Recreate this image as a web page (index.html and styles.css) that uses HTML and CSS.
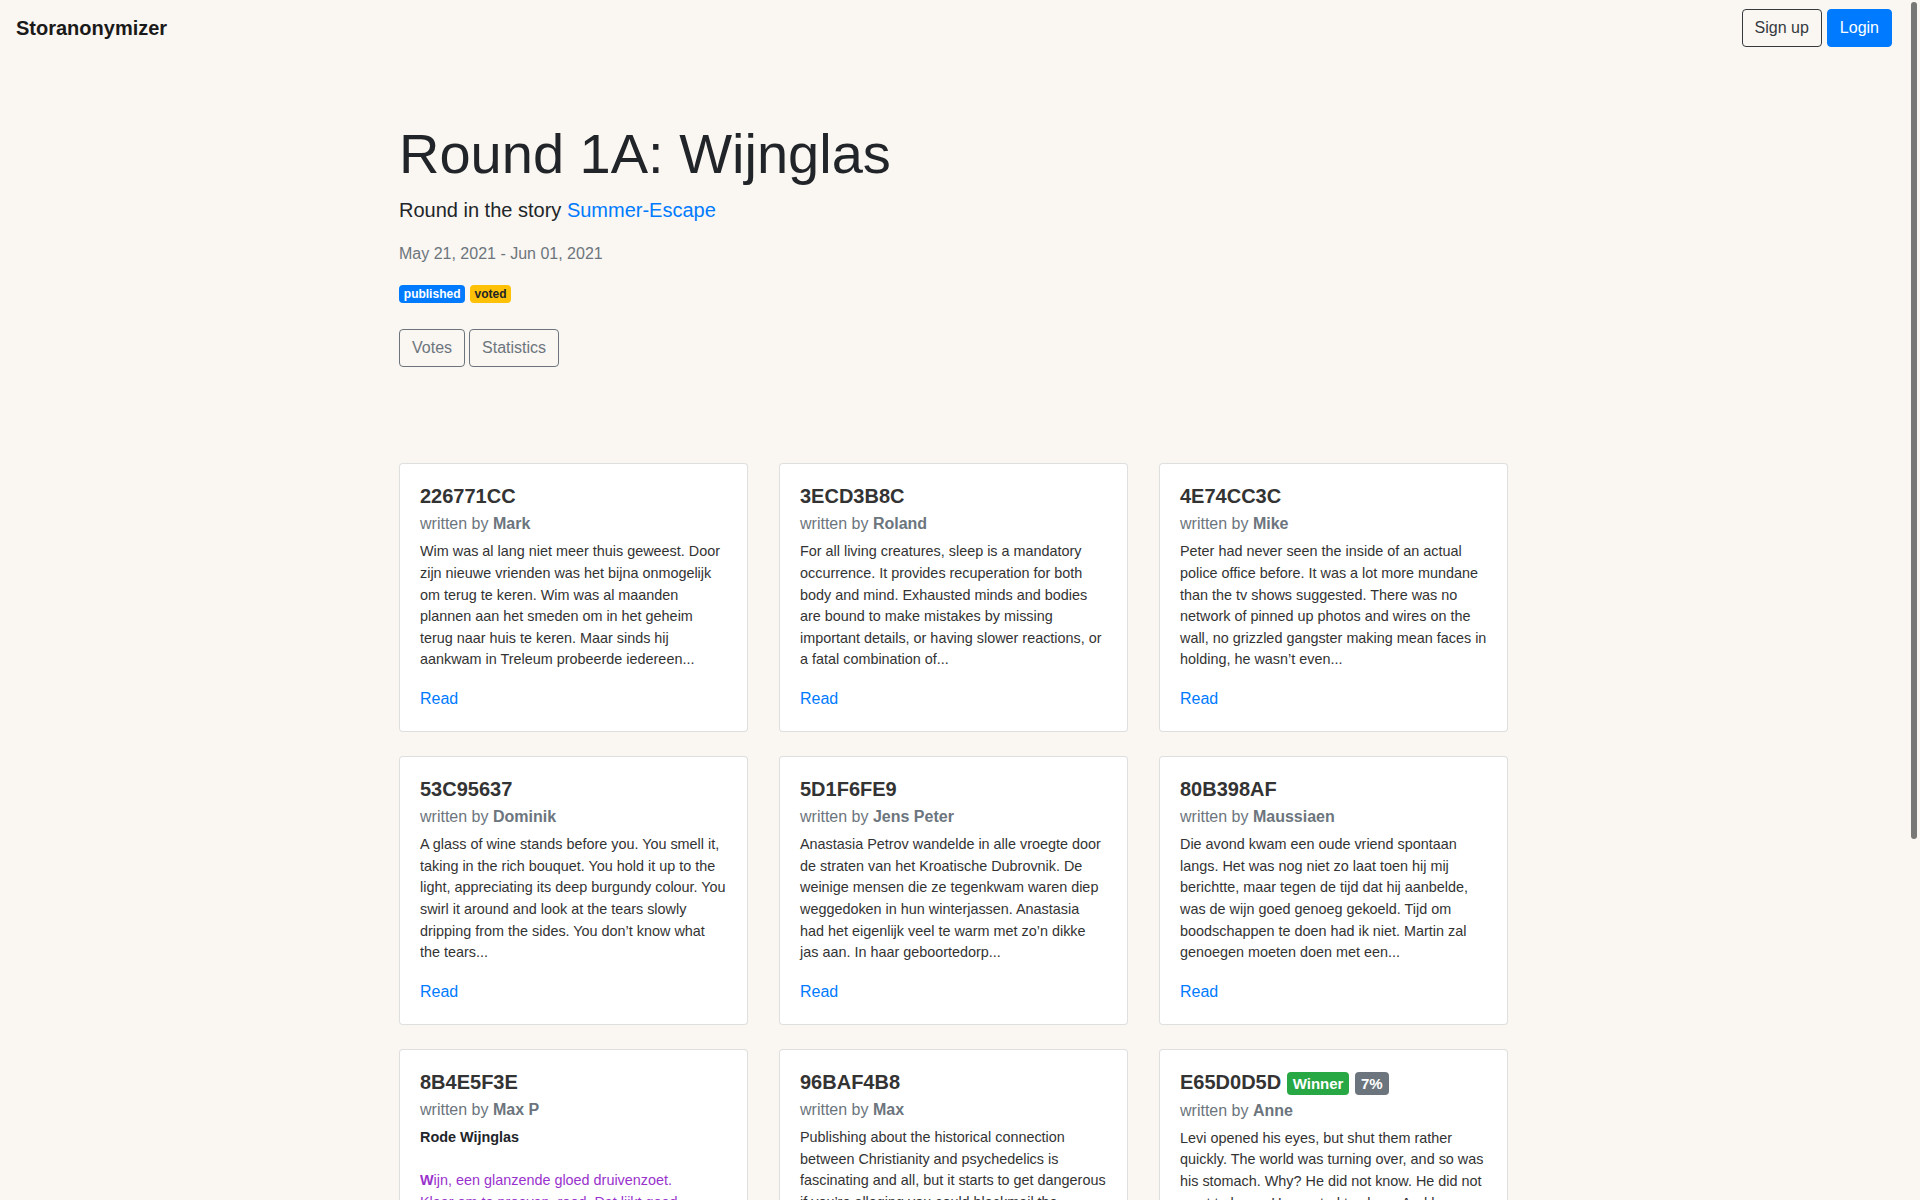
FILE: index.html
```html
<!DOCTYPE html>
<html lang="en">
<head>
<meta charset="utf-8">
<title>Round 1A: Wijnglas - Storanonymizer</title>
<link rel="stylesheet" href="styles.css">
</head>
<body>
<div class="scrollbar" aria-hidden="true"><div class="scrollbar-thumb"></div></div>
<nav class="navbar">
  <a class="brand" href="#">Storanonymizer</a>
  <div class="nav-actions">
    <a class="btn btn-outline-dark" href="#">Sign up</a>
    <a class="btn btn-primary" href="#">Login</a>
  </div>
</nav>

<main class="container">
  <header class="round-header">
    <h1 class="title">Round 1A: Wijnglas</h1>
    <p class="lead">Round in the story <a href="#">Summer-Escape</a></p>
    <p class="dates">May 21, 2021 - Jun 01, 2021</p>
    <div class="badges"><span class="badge badge-primary">published</span> <span class="badge badge-warning">voted</span></div>
    <div class="actions"><a class="btn btn-outline-secondary" href="#">Votes</a> <a class="btn btn-outline-secondary" href="#">Statistics</a></div>
  </header>

  <section class="cards">
    <article class="card">
      <div class="card-body">
        <h5 class="card-title">226771CC</h5>
        <h6 class="card-subtitle">written by <strong>Mark</strong></h6>
        <p class="card-text">Wim was al lang niet meer thuis geweest. Door zijn nieuwe vrienden was het bijna onmogelijk om terug te keren. Wim was al maanden plannen aan het smeden om in het geheim terug naar huis te keren. Maar sinds hij aankwam in Treleum probeerde iedereen...</p>
        <a class="card-link" href="#">Read</a>
      </div>
    </article>
    <article class="card">
      <div class="card-body">
        <h5 class="card-title">3ECD3B8C</h5>
        <h6 class="card-subtitle">written by <strong>Roland</strong></h6>
        <p class="card-text">For all living creatures, sleep is a mandatory occurrence. It provides recuperation for both body and mind. Exhausted minds and bodies are bound to make mistakes by missing important details, or having slower reactions, or a fatal combination of...</p>
        <a class="card-link" href="#">Read</a>
      </div>
    </article>
    <article class="card">
      <div class="card-body">
        <h5 class="card-title">4E74CC3C</h5>
        <h6 class="card-subtitle">written by <strong>Mike</strong></h6>
        <p class="card-text">Peter had never seen the inside of an actual police office before. It was a lot more mundane than the tv shows suggested. There was no network of pinned up photos and wires on the wall, no grizzled gangster making mean faces in holding, he wasn’t even...</p>
        <a class="card-link" href="#">Read</a>
      </div>
    </article>
    <article class="card">
      <div class="card-body">
        <h5 class="card-title">53C95637</h5>
        <h6 class="card-subtitle">written by <strong>Dominik</strong></h6>
        <p class="card-text">A glass of wine stands before you. You smell it, taking in the rich bouquet. You hold it up to the light, appreciating its deep burgundy colour. You swirl it around and look at the tears slowly dripping from the sides. You don’t know what the tears...</p>
        <a class="card-link" href="#">Read</a>
      </div>
    </article>
    <article class="card">
      <div class="card-body">
        <h5 class="card-title">5D1F6FE9</h5>
        <h6 class="card-subtitle">written by <strong>Jens Peter</strong></h6>
        <p class="card-text">Anastasia Petrov wandelde in alle vroegte door de straten van het Kroatische Dubrovnik. De weinige mensen die ze tegenkwam waren diep weggedoken in hun winterjassen. Anastasia had het eigenlijk veel te warm met zo’n dikke jas aan. In haar geboortedorp...</p>
        <a class="card-link" href="#">Read</a>
      </div>
    </article>
    <article class="card">
      <div class="card-body">
        <h5 class="card-title">80B398AF</h5>
        <h6 class="card-subtitle">written by <strong>Maussiaen</strong></h6>
        <p class="card-text">Die avond kwam een oude vriend spontaan langs. Het was nog niet zo laat toen hij mij berichtte, maar tegen de tijd dat hij aanbelde, was de wijn goed genoeg gekoeld. Tijd om boodschappen te doen had ik niet. Martin zal genoegen moeten doen met een...</p>
        <a class="card-link" href="#">Read</a>
      </div>
    </article>
    <article class="card">
      <div class="card-body">
        <h5 class="card-title">8B4E5F3E</h5>
        <h6 class="card-subtitle">written by <strong>Max P</strong></h6>
        <p class="card-text"><strong class="poem-title">Rode Wijnglas</strong><br><br><span class="poem"><b>W</b>ijn, een glanzende gloed druivenzoet.<br>Klaar om te proeven, rood. Dat lijkt goed.<br>Dansend in het glas, een zachte gloed,<br>een warme omhelzing, een zoete groet.<br><br>Wijn, een fluistering van de zomer,<br>een belofte van zon en van dromer.<br>Ik hef het glas en drink het leeg,<br>tot de laatste druppel zweeg...</span></p>
        <a class="card-link" href="#">Read</a>
      </div>
    </article>
    <article class="card">
      <div class="card-body">
        <h5 class="card-title">96BAF4B8</h5>
        <h6 class="card-subtitle">written by <strong>Max</strong></h6>
        <p class="card-text">Publishing about the historical connection between Christianity and psychedelics is fascinating and all, but it starts to get dangerous if you’re alleging you could blackmail the Vatican over the secrets hidden in its archives. Nobody wanted to listen...</p>
        <a class="card-link" href="#">Read</a>
      </div>
    </article>
    <article class="card">
      <div class="card-body">
        <h5 class="card-title">E65D0D5D <span class="badge badge-success">Winner</span> <span class="badge badge-secondary">7%</span></h5>
        <h6 class="card-subtitle">written by <strong>Anne</strong></h6>
        <p class="card-text">Levi opened his eyes, but shut them rather quickly. The world was turning over, and so was his stomach. Why? He did not know. He did not want to know. He wanted to sleep. And he wanted the world to stop spinning...</p>
        <a class="card-link" href="#">Read</a>
      </div>
    </article>
  </section>
</main>
</body>
</html>
```

FILE: styles.css
```css
html {
  background: #faf6f1;
}

body {
  margin: 0 12px 0 0;
  background: #faf6f1;
  color: #212529;
  font-family: "Liberation Sans", Arial, Helvetica, sans-serif;
  font-size: 16px;
  line-height: 1.5;
}

a {
  color: #007bff;
  text-decoration: none;
}

/* Window scrollbar (drawn, since the capture hides native scrollbars) */
.scrollbar {
  position: fixed;
  top: 0;
  right: 0;
  width: 12px;
  height: 100vh;
  background: #faf6f1;
  z-index: 10;
}

.scrollbar-thumb {
  margin: 2px 3px 0;
  width: 6px;
  height: 837px;
  border-radius: 3px;
  background: #787876;
}

/* Navbar */
.navbar {
  display: flex;
  align-items: center;
  justify-content: space-between;
  padding: 8px 16px;
}

.brand {
  color: #1a1a1a;
  font-size: 20px;
  font-weight: 700;
  line-height: 30px;
  padding: 5px 0;
}

.nav-actions {
  display: flex;
  gap: 5px;
}

.btn {
  display: inline-block;
  padding: 6px 12px;
  font-size: 16px;
  line-height: 24px;
  border: 1px solid transparent;
  border-radius: 4px;
  background: transparent;
}

.btn-outline-dark {
  color: #343a40;
  border-color: #343a40;
}

.btn-primary {
  color: #fff;
  background: #007bff;
  border-color: #007bff;
}

.btn-outline-secondary {
  color: #6c757d;
  border-color: #6c757d;
}

/* Container */
.container {
  width: 1110px;
  margin: 0 auto;
  padding: 0 15px 170px;
}

.round-header {
  padding-top: 64px;
}

.title {
  font-size: 56px;
  font-weight: 400;
  line-height: 1.2;
  margin: 0 0 8px;
  color: #212529;
}

.lead {
  font-size: 20px;
  line-height: 30px;
  margin: 0 0 17px;
}

.dates {
  color: #6c757d;
  margin: 0 0 15px;
}

.badges {
  line-height: 24px;
  margin-bottom: 24px;
}

.badge {
  display: inline-block;
  padding: 0.25em 0.4em;
  font-size: 75%;
  font-weight: 700;
  line-height: 1;
  border-radius: 4px;
  vertical-align: baseline;
  white-space: nowrap;
}

.badge-primary {
  background: #007bff;
  color: #fff;
}

.badge-warning {
  background: #ffc107;
  color: #212529;
}

.badge-success {
  background: #28a745;
  color: #fff;
}

.badge-secondary {
  background: #6c757d;
  color: #fff;
}

.actions {
  display: flex;
  gap: 4px;
}

/* Cards */
.cards {
  display: grid;
  grid-template-columns: repeat(3, 349px);
  column-gap: 31px;
  row-gap: 24px;
  align-items: start;
  margin-top: 96px;
}

.card {
  background: #fff;
  border: 1px solid rgba(0, 0, 0, 0.125);
  border-radius: 4px;
}

.card-body {
  padding: 20px;
}

.card-title {
  font-size: 20px;
  font-weight: 700;
  line-height: 1.2;
  margin: 0 0 12px;
  color: #333;
}

.card-subtitle {
  font-size: 16px;
  font-weight: 400;
  line-height: 1.2;
  margin: -6px 0 8px;
  color: #6c757d;
}

.card-subtitle strong {
  font-weight: 700;
}

.card-text {
  font-size: 14.4px;
  line-height: 1.5;
  margin: 0 0 16px;
  color: #333;
}

.poem-title {
  color: #212529;
}

.poem {
  color: #9932cc;
}

.card-link {
  display: block;
  line-height: 24px;
}
```
